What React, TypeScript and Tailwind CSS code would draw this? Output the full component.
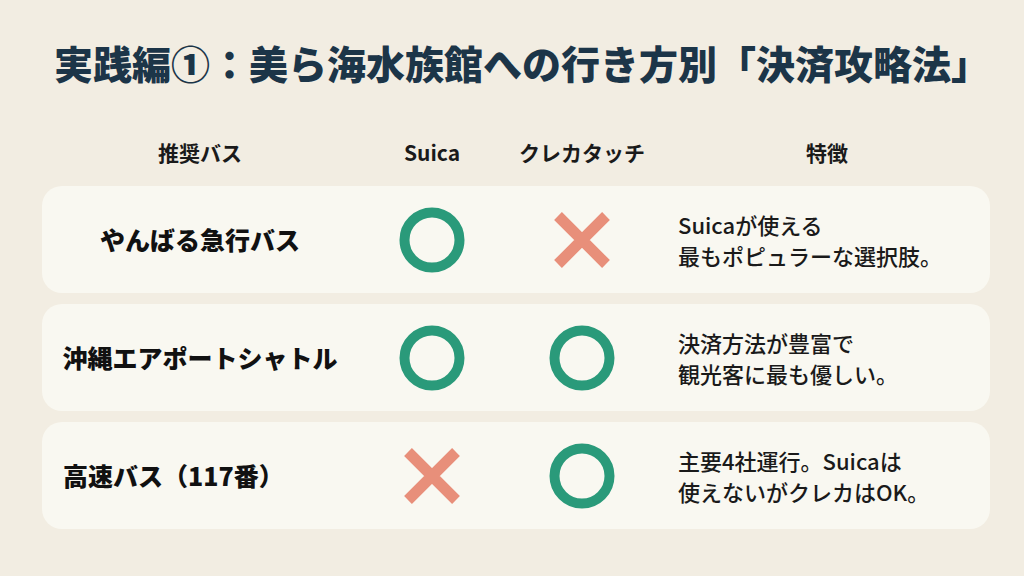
import React from 'react';

type Mark = 'ok' | 'ng';

interface BusRow {
  name: string;
  nameClass: string;
  suica: Mark;
  card: Mark;
  lines: string[];
}

const rows: BusRow[] = [
  {
    name: 'やんばる急行バス',
    nameClass: 'justify-center',
    suica: 'ok',
    card: 'ng',
    lines: ['Suicaが使える', '最もポピュラーな選択肢。'],
  },
  {
    name: '沖縄エアポートシャトル',
    nameClass: 'justify-center',
    suica: 'ok',
    card: 'ok',
    lines: ['決済方法が豊富で', '観光客に最も優しい。'],
  },
  {
    name: '高速バス（117番）',
    nameClass: 'justify-start pl-[21px]',
    suica: 'ng',
    card: 'ok',
    lines: ['主要4社運行。Suicaは', '使えないがクレカはOK。'],
  },
];

function Circle() {
  return (
    <svg width="66" height="66" viewBox="0 0 66 66">
      <circle cx="33" cy="33" r="27.5" fill="none" stroke="#2a9a7a" strokeWidth="10" />
    </svg>
  );
}

function Cross() {
  return (
    <svg width="60" height="60" viewBox="0 0 60 60">
      <path d="M6 6 L54 54 M54 6 L6 54" stroke="#e88f7a" strokeWidth="11" strokeLinecap="butt" />
    </svg>
  );
}

function MarkIcon({ mark }: { mark: Mark }) {
  return mark === 'ok' ? <Circle /> : <Cross />;
}

export default function App() {
  return (
    <div
      className="w-[1024px] h-[576px] bg-[#f2ede2] flex flex-col overflow-hidden"
      style={{ fontFamily: '"Noto Sans CJK JP", "Noto Sans", sans-serif' }}
    >
      <h1 className="pt-[38px] pl-[20px] text-center text-[39px] leading-[48px] font-black text-[#1c3548]">
        実践編①：美ら海水族館への行き方別「決済攻略法」
      </h1>

      <div className="ml-[42px] w-[948px] mt-[51px] grid grid-cols-[316px_148px_152px_1fr] h-[30px] items-center text-[21px] font-bold text-[#1a1a1a]">
        <div className="text-center">推奨バス</div>
        <div className="text-center">Suica</div>
        <div className="text-center">クレカタッチ</div>
        <div className="text-center pl-[6px]">特徴</div>
      </div>

      <div className="ml-[42px] w-[948px] mt-[19px] flex flex-col gap-[11px]">
        {rows.map((row) => (
          <div
            key={row.name}
            className="h-[107px] rounded-[20px] bg-[#f9f8f1] grid grid-cols-[316px_148px_152px_1fr] items-center"
          >
            <div className={`flex ${row.nameClass} text-[25px] font-black text-[#111]`}>{row.name}</div>
            <div className="flex justify-center">
              <MarkIcon mark={row.suica} />
            </div>
            <div className="flex justify-center">
              <MarkIcon mark={row.card} />
            </div>
            <div className="pl-[20px] text-[22px] leading-[31px] font-medium text-[#1a1a1a]">
              {row.lines.map((l) => (
                <div key={l}>{l}</div>
              ))}
            </div>
          </div>
        ))}
      </div>
    </div>
  );
}
